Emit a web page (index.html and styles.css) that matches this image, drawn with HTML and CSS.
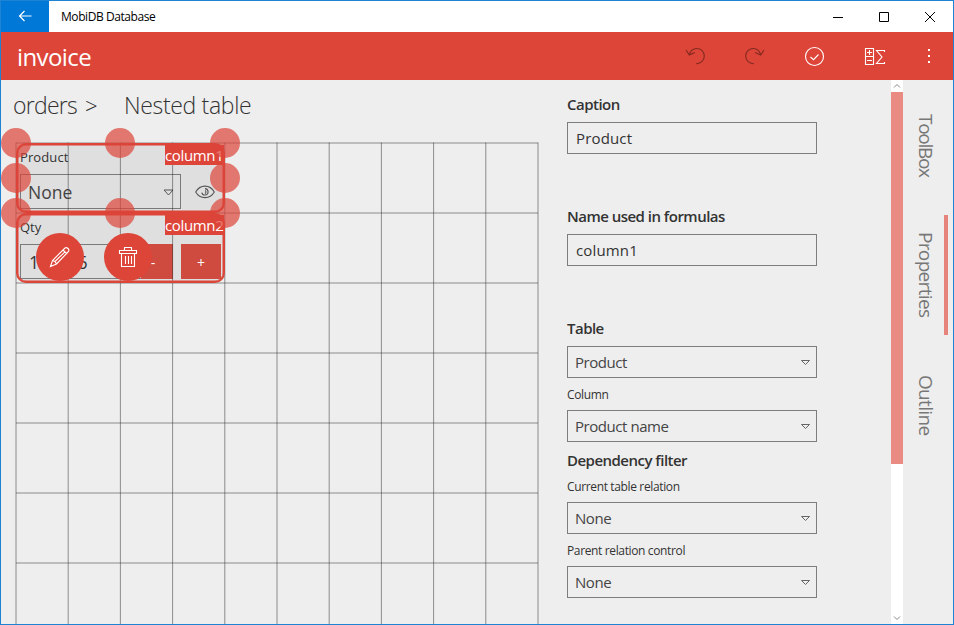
FILE: index.html
```html
<!DOCTYPE html>
<html lang="en">
<head>
<meta charset="utf-8">
<title>MobiDB Database</title>
<link rel="stylesheet" href="styles.css">
</head>
<body>
<div class="window">
  <header class="titlebar">
    <div class="back"><svg width="14" height="12" viewBox="0 0 14 12"><path d="M13.500 6H1.500M6.500 1l-5 5 5 5"/></svg></div>
    <div class="app-name">MobiDB Database</div>
    <div class="win-btn"><svg width="12" height="12"><path d="M1 6.500h10"/></svg></div>
    <div class="win-btn"><svg width="12" height="12"><path d="M1.500 1.500h9v9h-9z"/></svg></div>
    <div class="win-btn"><svg width="12" height="12"><path d="M1 1l10 10M11 1L1 11"/></svg></div>
  </header>
  <div class="appbar">
    <h1>invoice</h1>
    <div class="tool off"><svg width="22" height="22"><path d="M2 5l3.300 5 5.600-2.600M5.300 10C6.300 6 9 3.500 12.700 3.500a7.500 7.500 0 0 1 0 15.200H12"/></svg></div>
    <div class="tool off"><svg class="flip" width="22" height="22"><path d="M2 5l3.300 5 5.600-2.600M5.300 10C6.300 6 9 3.500 12.700 3.500a7.500 7.500 0 0 1 0 15.200H12"/></svg></div>
    <div class="tool"><svg width="22" height="22"><circle cx="10.500" cy="11.500" r="9"/><path d="M6.500 12l3 2.700 5-5.200"/></svg></div>
    <div class="tool"><svg width="22" height="22"><path d="M1.500 3.500h8v16h-8zM1.500 11.500h8M3 7.500h5M5.500 5v5M3 15.500h5M20.500 7V5.500h-8l5.500 6.500-5.500 6.500h8V17"/></svg></div>
    <div class="tool more"><svg width="4" height="16"><path d="M1 1h2v2H1zM1 7h2v2H1zM1 13h2v2H1z"/></svg></div>
  </div>
  <main class="main">
    <section class="designer">
      <nav class="crumbs"><span class="crumb">orders</span><span class="sep">&gt;</span><span class="crumb current">Nested table</span></nav>
      <div class="stage">
        <div class="cell first">
          <div class="caption">Product</div>
          <div class="row">
            <div class="combo"><span>None</span><svg width="11" height="7"><path d="M1 1h9L5.500 6z"/></svg></div>
            <svg class="eye" width="20" height="14"><path d="M.700 7C5-.800 15-.800 19.300 7 15 14.500 5 14.500.700 7zM10 3.600a3.200 3.200 0 1 1-3.200 4M10 5.600a1.500 1.500 0 0 1 0 2.800"/></svg>
          </div>
        </div>
        <div class="cell second">
          <div class="caption">Qty</div>
          <div class="row">
            <div class="number">123456</div>
            <div class="step">-</div>
            <div class="step">+</div>
          </div>
        </div>
        <svg class="grid" width="540" height="490"><path d="M16 8.500V490M68.200 8.500V490M120.400 8.500V490M172.600 8.500V490M224.800 8.500V490M277 8.500V490M329.200 8.500V490M381.400 8.500V490M433.600 8.500V490M485.800 8.500V490M538 8.500V490M16 9h522M16 79h522M16 149h522M16 219h522M16 289h522M16 359h522M16 429h522"/></svg>
        <div class="frame first"><span class="tag">column1</span></div>
        <div class="frame second"><span class="tag">column2</span></div>
        <svg class="handles" width="250" height="110"><circle cx="16" cy="19" r="15"/><circle cx="120" cy="19" r="15"/><circle cx="225" cy="19" r="15"/><circle cx="16" cy="54" r="15"/><circle cx="225" cy="54" r="15"/><circle cx="16" cy="89" r="15"/><circle cx="120" cy="89" r="15"/><circle cx="225" cy="89" r="15"/></svg>
        <div class="fab edit"><svg width="22" height="22"><path d="M1.500 20.500l2-6L16 2q1.500-1 3 .500t.500 3L7.500 18zM3.500 14.500q3 .500 4 3.500M14 4l4 4M6 15.500L16 5.800"/></svg></div>
        <div class="fab remove"><svg width="20" height="22"><path d="M1.500 4.500h17v3h-17zM6.500 4.500v-3h7v3M3.500 7.500v13h13v-13M7.500 10v8M10.500 10v8M13.500 10v8"/></svg></div>
      </div>
    </section>
    <section class="props">
      <h2>Caption</h2>
      <div class="field text">Product</div>
      <h2 class="far">Name used in formulas</h2>
      <div class="field text">column1</div>
      <h2 class="far">Table</h2>
      <div class="field"><span>Product</span><svg width="11" height="7"><path d="M1.500 1.500h8L5.500 5.500z"/></svg></div>
      <h3>Column</h3>
      <div class="field"><span>Product name</span><svg width="11" height="7"><path d="M1.500 1.500h8L5.500 5.500z"/></svg></div>
      <h2 class="group">Dependency filter</h2>
      <h3 class="next">Current table relation</h3>
      <div class="field"><span>None</span><svg width="11" height="7"><path d="M1.500 1.500h8L5.500 5.500z"/></svg></div>
      <h3>Parent relation control</h3>
      <div class="field"><span>None</span><svg width="11" height="7"><path d="M1.500 1.500h8L5.500 5.500z"/></svg></div>
    </section>
    <div class="scroll">
      <div class="arrow"><svg width="8" height="6"><path d="M1 4.500l3-3 3 3"/></svg></div>
      <div class="thumb"></div>
      <div class="arrow down"><svg width="8" height="6"><path d="M1 1.500l3 3 3-3"/></svg></div>
    </div>
    <aside class="tabs">
      <div class="tab box">ToolBox</div>
      <div class="tab active">Properties</div>
      <div class="tab">Outline</div>
    </aside>
  </main>
</div>
</body>
</html>
```
FILE: styles.css
```css
* { box-sizing: border-box; margin: 0; padding: 0; }
body { width: 954px; height: 625px; overflow: hidden; font-family: "Open Sans", "Noto Sans", sans-serif; color: #333; }
svg { display: block; fill: none; flex: none; }
.window { display: flex; flex-direction: column; width: 954px; height: 625px; border: 1px solid #1f83d3; background: #eee; }

.titlebar { display: flex; align-items: center; height: 31px; background: #fff; }
.back { display: flex; align-items: center; justify-content: center; width: 48px; height: 31px; padding-bottom: 2px; background: #0078d7; }
.back svg { stroke: #fff; stroke-width: 1.2; }
.app-name { flex: 1; padding: 0 0 1px 12px; font-size: 12px; letter-spacing: -.43px; color: #000; }
.win-btn { display: flex; justify-content: center; width: 46px; }
.win-btn svg { stroke: #000; }

.appbar { display: flex; align-items: center; height: 48px; padding-left: 16px; background: #dd4539; }
h1 { flex: 1; padding-top: 2px; font-size: 24px; line-height: 48px; font-weight: 400; letter-spacing: -.6px; color: #fff; }
.tool { display: flex; justify-content: center; width: 60px; }
.tool svg { stroke: #fff; stroke-width: 1.1; }
.tool.off svg { stroke: #83291f; }
.flip { transform: scaleX(-1); }
.more { width: 48px; }
.tool.more svg { fill: #fff; stroke: none; }

.main { display: flex; flex: 1; min-height: 0; }
.designer { width: 566px; }
.crumbs { display: flex; align-items: center; height: 54px; padding: 0 0 3px 12px; font-size: 23px; font-weight: 300; line-height: 51px; }
.crumb { width: 72px; letter-spacing: -.75px; }
.crumb.current { width: auto; letter-spacing: -.33px; }
.sep { width: 39px; font-size: 22px; }

.stage { position: relative; height: 490px; margin-left: -1px; }
.grid, .handles { position: absolute; left: 0; top: 0; }
.grid { stroke: #333; stroke-opacity: .52; }
.handles { top: -10px; fill: rgba(221, 69, 57, .7); }
.cell, .frame { position: absolute; left: 16px; width: 209px; height: 70px; border-radius: 10px; }
.first { top: 9px; }
.second { top: 79px; }
.cell { padding: 3px 4px; background: #dfdfdf; }
.caption { height: 28px; font-size: 13px; line-height: 22px; letter-spacing: .1px; }
.second .caption { letter-spacing: 0; }
.row { display: flex; align-items: center; }
.combo { display: flex; align-items: center; justify-content: space-between; width: 161px; height: 35px; padding: 1px 6px 0 7px; border: 1px solid #7a7a7a; font-size: 17.5px; color: #444; }
.combo svg { stroke: #555; }
.eye { margin-left: 14px; stroke: #555; stroke-width: 1.1; }
.number { width: 121px; height: 35px; padding-left: 8px; border: 1px solid #7a7a7a; border-right: 0; font-size: 17.5px; line-height: 34px; letter-spacing: -.3px; }
.step { width: 32px; height: 35px; padding-right: 8px; background: #cf4b3f; color: #fff; font-size: 14px; line-height: 37px; text-align: center; }
.step + .step { width: 40px; margin-left: 8px; padding: 0; }
.frame { border: 2px solid #dd4539; box-shadow: inset 0 0 0 .5px #dd4539; }
.tag { position: absolute; right: -1px; top: 0; width: 59px; height: 20px; background: #dd4539; color: #fff; font-size: 15px; line-height: 21px; letter-spacing: -.35px; }
.fab { display: flex; align-items: center; justify-content: center; position: absolute; top: 99px; width: 48px; height: 48px; border-radius: 50%; background: #dd4539; }
.fab svg { stroke: #fff; stroke-width: 1.1; }
.edit { left: 36px; }
.remove { left: 104px; padding-right: 1px; }

.props { width: 324px; padding-top: 14px; }
h2 { height: 28px; font-size: 15px; line-height: 20px; font-weight: 600; letter-spacing: -.52px; }
h2.far { margin-top: 52px; }
.field { display: flex; align-items: center; justify-content: space-between; width: 250px; height: 32px; padding: 0 5px 0 7px; border: 1px solid #7d7d7d; font-size: 15px; letter-spacing: -.45px; color: #444; }
.field.text { padding-left: 8px; letter-spacing: .15px; color: #333; }
.field svg { stroke: #666; }
h3 { height: 32px; font-size: 12px; line-height: 34px; font-weight: 400; letter-spacing: -.36px; }
h2.group { height: 32px; line-height: 36px; }
h3.next { height: 28px; line-height: 26px; }

.scroll { display: flex; flex-direction: column; width: 12px; background: #fff; }
.arrow { display: flex; align-items: center; justify-content: center; height: 12px; }
.arrow svg { stroke: #888; }
.thumb { height: 372px; background: #e98b83; }
.down { margin-top: auto; }
.tabs { display: flex; flex-direction: column; gap: 10px; width: 45px; padding-top: 5px; }
.tab { height: 120px; padding-left: 4px; writing-mode: vertical-rl; line-height: 37px; text-align: center; font-size: 19px; letter-spacing: -.66px; color: #777; border-right: 4px solid transparent; }
.tab.box { letter-spacing: -1.3px; }
.tab.active { border-color: #e6837b; }
```
